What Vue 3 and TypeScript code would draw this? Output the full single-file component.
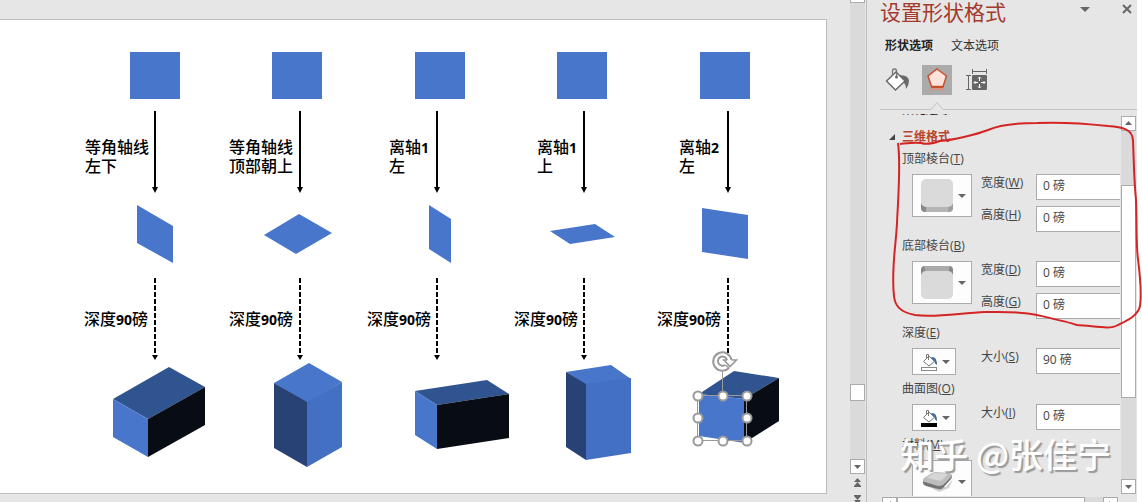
<script setup lang="ts">
import { ref } from 'vue'

interface Face { points: string; fill: string }
interface Column {
  square: number
  arrow: number
  labelX: number
  lines: { text: string; digit: string }[]
  depthX: number
  flat: string
  faces: Face[]
  selected: boolean
}

const BLUE = '#4776cb'
const SHADE = '#30548f'
const DARK = '#080c15'
const NAVY = '#284275'
const SIDE = '#4370c2'

const columns: Column[] = [
  {
    square: 130, arrow: 155, labelX: 85, depthX: 84, selected: false,
    lines: [{ text: '等角轴线', digit: '' }, { text: '左下', digit: '' }],
    flat: '137,205 173,226 173,263 137,243',
    faces: [
      { points: '113,399 169,367 205,387 148,419', fill: SHADE },
      { points: '113,399 148,419 148,457 113,437', fill: BLUE },
      { points: '148,419 205,387 205,425 148,457', fill: DARK },
    ],
  },
  {
    square: 272, arrow: 300, labelX: 229, depthX: 229, selected: false,
    lines: [{ text: '等角轴线', digit: '' }, { text: '顶部朝上', digit: '' }],
    flat: '264,235 299,214 332,233 296,254',
    faces: [
      { points: '274,383 309,363 342,382 307,403', fill: BLUE },
      { points: '274,383 307,402 307,467 274,448', fill: NAVY },
      { points: '307,402 342,382 342,447 307,467', fill: SIDE },
    ],
  },
  {
    square: 415, arrow: 437, labelX: 389, depthX: 367, selected: false,
    lines: [{ text: '离轴', digit: '1' }, { text: '左', digit: '' }],
    flat: '429,205 451,219 451,263 429,249',
    faces: [
      { points: '415,391 487,380 509,394 437,405', fill: SHADE },
      { points: '415,391 437,405 437,449 415,435', fill: BLUE },
      { points: '437,405 509,394 509,438 437,449', fill: DARK },
    ],
  },
  {
    square: 557, arrow: 584, labelX: 537, depthX: 514, selected: false,
    lines: [{ text: '离轴', digit: '1' }, { text: '上', digit: '' }],
    flat: '550,231 595,224 615,237 570,244',
    faces: [
      { points: '566,372 611,365 631,379 586,385', fill: BLUE },
      { points: '566,372 586,384 586,460 566,447', fill: NAVY },
      { points: '586,384 631,378 631,453 586,460', fill: SIDE },
    ],
  },
  {
    square: 700, arrow: 728, labelX: 679, depthX: 657, selected: true,
    lines: [{ text: '离轴', digit: '2' }, { text: '左', digit: '' }],
    flat: '702,208 748,215 748,259 702,252',
    faces: [
      { points: '699,394 734,371 779,378 744,399', fill: SHADE },
      { points: '699,394 745,399 745,443 699,436', fill: BLUE },
      { points: '744,399 779,378 779,421 744,443', fill: DARK },
    ],
  },
]

const handles = [
  [698, 396], [723, 396], [747, 396], [698, 418],
  [747, 418], [698, 441], [723, 441], [747, 441],
]

const bevels = ref([
  {
    id: 'top', name: '顶部棱台', key: 'T',
    fields: [{ name: '宽度', key: 'W', value: '0 磅' }, { name: '高度', key: 'H', value: '0 磅' }],
  },
  {
    id: 'bottom', name: '底部棱台', key: 'B',
    fields: [{ name: '宽度', key: 'D', value: '0 磅' }, { name: '高度', key: 'G', value: '0 磅' }],
  },
])

const fills = ref([
  { id: 'depth', name: '深度', key: 'E', swatch: '#ffffff', edge: '#8a8a8a', size: 'S', value: '90 磅' },
  { id: 'contour', name: '曲面图', key: 'O', swatch: '#000000', edge: '#000000', size: 'I', value: '0 磅' },
])
</script>

<template>
  <div class="app">
    <main class="editor">
      <svg class="slide" viewBox="0 20 826 473" role="img" aria-label="三维旋转示例">
        <g v-for="c in columns" :key="c.square">
          <rect :x="c.square" y="52" width="50" height="47" :fill="BLUE" />
          <path :d="`M${c.arrow} 111V188`" stroke="#000" stroke-width="2" />
          <path :d="`M${c.arrow - 3} 187h6l-3 6z`" />
          <text v-for="(line, i) in c.lines" :key="i" :x="c.labelX" :y="153 + i * 19">{{ line.text }}<tspan class="digit">{{ line.digit }}</tspan></text>
          <polygon :points="c.flat" :fill="BLUE" />
          <path :d="`M${c.arrow} 278V355`" stroke="#000" stroke-width="2" stroke-dasharray="5 2" />
          <path v-if="!c.selected" :d="`M${c.arrow - 3} 355h6l-3 5z`" />
          <text :x="c.depthX" y="325">深度<tspan class="digit">90</tspan>磅</text>
          <polygon v-for="f in c.faces" :key="f.points" :points="f.points" :fill="f.fill" />
        </g>
        <g fill="none" stroke="#9a9a9a">
          <path d="M722.500 371V396M697.500 395.500H746.500V440.500H697.500Z" />
          <circle v-for="h in handles" :key="h.join()" :cx="h[0]" :cy="h[1]" r="4.5" fill="#fff" stroke-width="2" />
          <circle cx="722.5" cy="361.5" r="10" fill="#fff" stroke="none" />
          <path d="M729 368A9.2 9.2 0 1 1 731.5 360" stroke-width="2" />
          <path d="M725 365A4.6 4.6 0 1 1 727 360" stroke-width="2" />
          <path d="M722.500 360h4.500M731.500 360h5l-6.500 6.500-6-6.500" fill="#fff" stroke-width="1.600" />
          <path d="M725.500 365l3.500 3" stroke-width="1.600" />
        </g>
      </svg>
    </main>

    <div class="scroll editor-scroll">
      <span class="cap"></span>
      <span class="track"><span class="thumb"></span></span>
      <button class="step" aria-label="向下滚动"><svg viewBox="0 0 13 13"><path d="M3 5h7l-3.500 4z" /></svg></button>
      <button class="jump" aria-label="上一张"><svg viewBox="0 0 13 16"><path d="M3 8l3.500-4 3.500 4zM3 12l3.500-4 3.500 4zM3 12h7v1H3z" /></svg></button>
      <button class="jump" aria-label="下一张"><svg viewBox="0 0 13 16"><path d="M3 5h7v1l-3.500 4L3 6zM3 10h7l-3.500 4z" /></svg></button>
    </div>

    <aside class="pane">
      <header class="head">
        <h1>设置形状格式</h1>
        <button class="tool" aria-label="任务窗格选项"><svg viewBox="0 0 12 12"><path d="M1 4h10L6 9z" fill="#666" /></svg></button>
        <button class="tool" aria-label="关闭"><svg viewBox="0 0 12 12"><path d="M2 2l8 8M10 2l-8 8" stroke="#666" stroke-width="2" /></svg></button>
      </header>
      <nav class="tabs">
        <button class="tab on">形状选项</button>
        <button class="tab">文本选项</button>
      </nav>
      <div class="kinds">
        <button class="kind" aria-label="填充与线条">
          <svg viewBox="0 0 30 30">
            <path d="M17 10q10 0 10 6q0 4-3 8q0-5-3-7z" fill="#6a6a6a" />
            <path d="M4.500 16L14 7l9 9-9.500 9z" fill="#fff" stroke="#666" stroke-width="1.400" />
            <path d="M10.500 11V6q0-2 2-2t2 2v6" fill="none" stroke="#777" stroke-width="1.300" />
            <circle cx="14.500" cy="12" r="1.500" fill="#666" />
          </svg>
        </button>
        <button class="kind on" aria-label="效果">
          <svg viewBox="0 0 30 30">
            <path d="M15 4L24.500 11 21 21.500H9.500L6 11z" fill="#fbe3dc" stroke="#c9502e" stroke-width="1.500" />
            <path d="M9 22h12.500" stroke="#c9502e" stroke-width="2" />
            <path d="M8.500 23.500h13v3.500l-1.500-2H10l-1.500 2z" fill="#e58d75" />
          </svg>
        </button>
        <button class="kind" aria-label="大小与属性">
          <svg viewBox="0 0 30 30">
            <path d="M10.500 6.500h14M10.500 4v5M24.500 4v5M6.500 10.500v14M4 10.500h5M4 24.500h5" stroke="#666" />
            <rect x="10" y="10" width="15" height="15" rx="1" fill="#666" />
            <path d="M17.500 12v4M17.500 19v4M12 17.500h4M19 17.500h4M16 13.500l1.500-1.500 1.500 1.500M16 21.500l1.500 1.500 1.500-1.500M13.500 16L12 17.500l1.500 1.500M21.500 16l1.500 1.500-1.500 1.500" fill="none" stroke="#fff" />
          </svg>
        </button>
      </div>
      <svg class="rule" viewBox="0 0 257 10" preserveAspectRatio="xMinYMin slice" aria-hidden="true">
        <path d="M0 8.500H51L57 1.500L63 8.500H600" fill="none" stroke="#c3c3c3" />
      </svg>

      <div class="body">
        <form class="form" @submit.prevent>
          <div class="previous"><span>柔化边缘</span></div>
          <h2><svg viewBox="0 0 8 8"><path d="M7 1v6H1z" fill="#444" /></svg>三维格式</h2>

          <section v-for="b in bevels" :key="b.id" class="group">
            <h3 :id="b.id">{{ b.name }}(<u>{{ b.key }}</u>)</h3>
            <div class="row">
              <button class="gallery" :aria-labelledby="b.id">
                <svg v-if="b.id === 'top'" viewBox="0 0 32 33">
                  <path d="M0 24l4 3h24l4-3v5q0 4-4 4H4q-4 0-4-4z" fill="#b4b4b4" />
                  <path d="M0 24l5 3v6q-5 0-5-4z" fill="#888" />
                  <path d="M32 24l-5 3v6q5 0 5-4z" fill="#a0a0a0" />
                  <rect width="32" height="28" rx="5" fill="#dadada" />
                </svg>
                <svg v-else viewBox="0 0 32 33">
                  <path d="M0 9V4q0-4 4-4h24q4 0 4 4v5z" fill="#aaa" />
                  <path d="M0 9V4q0-3 3-4l2 6zM32 9V4q0-3-3-4l-2 6z" fill="#888" />
                  <rect y="5" width="32" height="28" rx="5" fill="#dadada" />
                </svg>
                <i class="caret"></i>
              </button>
              <div class="fields">
                <label v-for="f in b.fields" :key="f.key">
                  <span>{{ f.name }}(<u>{{ f.key }}</u>)</span>
                  <input v-model="f.value" type="text" />
                </label>
              </div>
            </div>
          </section>

          <section v-for="p in fills" :key="p.id" class="group">
            <h3 :id="p.id">{{ p.name }}(<u>{{ p.key }}</u>)</h3>
            <div class="row">
              <button class="picker" :aria-labelledby="p.id">
                <svg viewBox="0 0 17 18">
                  <path d="M10 4q6-1 6 8q-2-1-3-4z" fill="#3f6c9c" />
                  <path d="M2.500 8.500L8 3l5.500 5.500L8 13z" fill="#fff" stroke="#777" />
                  <path d="M5.500 6V1.500h2V7" fill="none" stroke="#777" />
                  <rect x="0.500" y="14.500" width="15" height="3" :fill="p.swatch" :stroke="p.edge" />
                </svg>
                <i class="caret"></i>
              </button>
              <div class="fields">
                <label>
                  <span>大小(<u>{{ p.size }}</u>)</span>
                  <input v-model="p.value" type="text" />
                </label>
              </div>
            </div>
          </section>

          <section class="group">
            <h3 id="material">材料(<u>M</u>)</h3>
            <div class="row">
              <button class="gallery" aria-labelledby="material">
                <svg viewBox="0 0 32 33">
                  <path d="M3 19l22 3 7-8-4 9-10 4z" fill="#d0d0d0" />
                  <path d="M2 15v3q0 2 3 3l12 3q3 1 5-1l8-9q1-1 1-4z" fill="#747474" />
                  <path d="M3 13l8-5q2-1 4-1l13 1q4 1 2 4l-8 8q-2 1-5 1L4 17q-4-1-1-4z" fill="#bdbdbd" />
                  <path d="M6 13l7-5 14 1-7 7z" fill="#d6d6d6" />
                </svg>
                <i class="caret"></i>
              </button>
            </div>
          </section>
        </form>

        <div class="scroll pane-scroll">
          <button class="step" aria-label="向上滚动"><svg viewBox="0 0 13 13"><path d="M3 8h7L6.500 4z" /></svg></button>
          <span class="track"><span class="thumb"></span></span>
          <button class="step" aria-label="向下滚动"><svg viewBox="0 0 13 13"><path d="M3 5h7l-3.500 4z" /></svg></button>
        </div>
      </div>

      <div class="across">
        <button class="step" aria-label="向左滚动"><svg viewBox="0 0 13 13"><path d="M8 3v7L4 6.500z" /></svg></button>
        <span class="bar"></span>
        <button class="step" aria-label="向右滚动"><svg viewBox="0 0 13 13"><path d="M5 3v7l4-3.500z" /></svg></button>
      </div>

      <svg class="ink" viewBox="867 0 275 502" width="275" height="502" aria-hidden="true">
        <path d="M900 144C909 143 915 142 921 143C928 145 934 143 940 141C953 140 975 135 988 130C1001 124 1018 123 1037 123C1060 122 1090 124 1108 126C1122 127 1133 129 1133 141C1134 165 1134 180 1136 200C1137 225 1136 245 1138 259C1140 275 1142 292 1140 306C1138 316 1126 321 1118 325C1110 330 1095 326 1077 325C1068 322 1050 318 1037 315C1020 311 1000 312 985 312C960 313 935 318 915 315C900 312 895 306 894 296C891 270 896 245 897 223C898 200 901 165 898 143" />
      </svg>
      <div class="mark">知乎 @张佳宁</div>
    </aside>
  </div>
</template>

<style>
body {
  margin: 0;
  background: #fff;
}
</style>

<style scoped>
* {
  box-sizing: border-box;
}

.app {
  display: flex;
  height: 100vh;
  padding-right: 5px;
  overflow: hidden;
  font: 12px/16px "Open Sans", "Noto Sans CJK SC", sans-serif;
  color: #444;
}

button {
  margin: 0;
  padding: 0;
  border: 0;
  background: none;
  font: inherit;
  color: inherit;
}

svg {
  display: block;
}

h1, h2, h3 {
  margin: 0;
  font: inherit;
}

.editor {
  flex: 1;
  min-width: 0;
  padding: 19px 23px 0 0;
  background: #e6e6e6;
}

.slide {
  width: 100%;
  border: 1px solid #bdbdbd;
  border-left: 0;
  background: #fff;
}

.slide text {
  font: 500 16px "Noto Sans CJK SC", sans-serif;
  fill: #000;
}

.slide .digit {
  font: 700 14px "Open Sans", sans-serif;
}

.scroll {
  display: flex;
  flex-direction: column;
  flex: none;
  background: #dadada;
}

.step {
  flex: none;
  width: 15px;
  height: 15px;
  border: 1px solid #ababab;
  background: #fff;
}

.step svg, .jump svg {
  width: 13px;
  fill: #666;
}

.track {
  display: flex;
  flex-direction: column;
  flex: 1;
}

.thumb {
  border: 1px solid #ababab;
  background: #fff;
}

.editor-scroll {
  width: 16px;
  padding-right: 1px;
  box-shadow: inset -1px 0 #e6e6e6;
}

.cap {
  height: 3px;
  border: 1px solid #ababab;
  border-top: 0;
  background: #fff;
}

.editor-scroll .thumb {
  height: 17px;
  margin: auto 0 58px;
}

.jump {
  flex: none;
  height: 16px;
  padding-left: 1px;
  background: #e6e6e6;
}

.jump:last-child {
  height: 12px;
  overflow: hidden;
}

.pane {
  position: relative;
  display: flex;
  flex-direction: column;
  flex: none;
  width: 271px;
  border-left: 1px solid #bdbdbd;
  background: #e6e6e6;
}

.head {
  display: flex;
  gap: 30px;
  height: 32px;
  padding: 0 4px 0 13px;
}

.head h1 {
  flex: 1;
  font-size: 21px;
  line-height: 24px;
  font-weight: 400;
  color: #a33a2c;
}

.tool {
  width: 12px;
  height: 18px;
}

.tabs {
  display: flex;
  gap: 18px;
  height: 33px;
  padding: 6px 18px 0;
}

.tab {
  height: 16px;
  color: #333;
}

.tab.on {
  font-weight: 700;
  color: #222;
}

.kinds {
  display: flex;
  gap: 10px;
  padding-left: 15px;
}

.kind {
  width: 30px;
  height: 30px;
}

.kind.on {
  background: #ababab;
}

.rule {
  flex: none;
  width: 257px;
  height: 10px;
  margin: 6px 0 3px 13px;
}

.body {
  display: flex;
  flex: 1;
  min-height: 0;
}

.form {
  flex: 1;
  overflow: hidden;
  margin-bottom: 1px;
}

.previous {
  display: flex;
  align-items: flex-end;
  height: 4px;
  padding-left: 35px;
  overflow: hidden;
  color: #222;
}

h2 {
  display: flex;
  align-items: center;
  gap: 6px;
  margin: 11px 0 6px;
  padding-left: 21px;
  font-weight: 700;
  color: #b8452d;
}

h2 svg {
  width: 8px;
}

.group {
  margin-bottom: 5px;
}

h3 {
  padding: 0 0 7px 35px;
  margin-bottom: 0;
}

.group + .group {
  padding-top: 1px;
}

.row {
  display: grid;
  grid-template-columns: 69px 1fr;
  align-items: start;
  padding-left: 45px;
}

.gallery, .picker {
  display: flex;
  align-items: center;
  justify-content: space-between;
  padding: 0 5px 0 8px;
  border: 1px solid #ababab;
  background: #fdfdfd;
}

.gallery {
  width: 60px;
  height: 43px;
}

.gallery svg {
  width: 32px;
}

.picker {
  width: 44px;
  height: 27px;
}

.picker svg {
  width: 17px;
}

.caret {
  border: 4px solid transparent;
  border-top-color: #666;
  border-bottom: 0;
}

.fields {
  display: grid;
  gap: 6px;
}

label {
  display: grid;
  grid-template-columns: 55px 1fr;
  line-height: 18px;
}

input {
  width: 100%;
  min-width: 0;
  height: 26px;
  padding: 0 6px 4px;
  border: 1px solid #ababab;
  border-right: 0;
  border-radius: 0;
  background: #fff;
  font: inherit;
  color: #444;
}

.pane-scroll {
  width: 15px;
  margin: 2px 1px 3px 1px;
}

.pane-scroll .thumb {
  height: 213px;
  margin-top: 54px;
}

.across {
  display: flex;
  flex: none;
  height: 5px;
  margin: 0 19px 0 15px;
  overflow: hidden;
  background: #dadada;
}

.bar {
  flex: 1;
  height: 15px;
  margin-right: 18px;
  border: 1px solid #ababab;
  background: #fff;
}

.ink {
  position: absolute;
  top: 0;
  left: 0;
  pointer-events: none;
}

.ink path {
  fill: none;
  stroke: #d42424;
  stroke-width: 2;
}

.mark {
  position: absolute;
  right: 26px;
  bottom: 28px;
  font: 500 34px/40px "Noto Sans CJK SC", sans-serif;
  color: #fff;
  text-shadow: 2px 2px 1px #999;
  white-space: nowrap;
  pointer-events: none;
}
</style>
